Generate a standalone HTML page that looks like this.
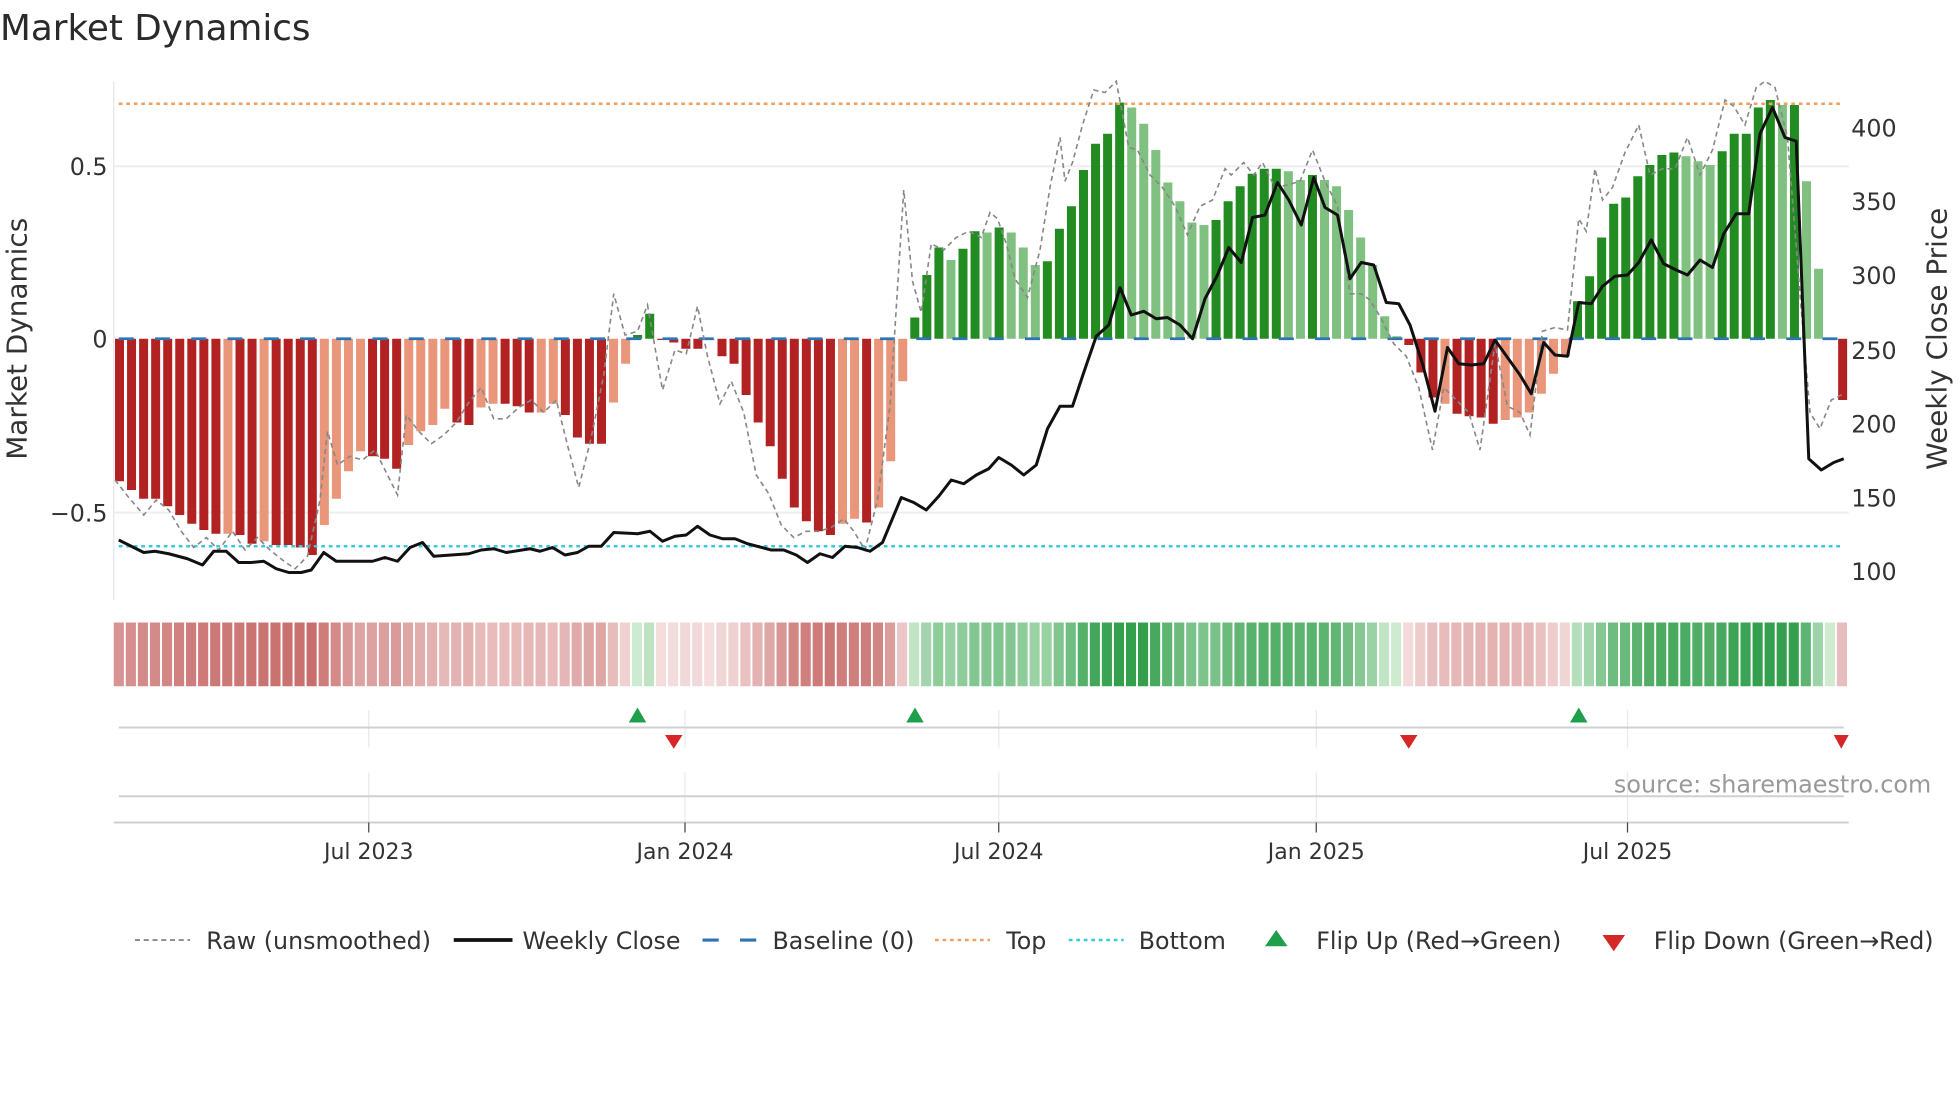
<!DOCTYPE html>
<html><head><meta charset="utf-8"><style>
html,body{margin:0;padding:0;background:#fff;}
svg{display:block;font-family:"DejaVu Sans","Liberation Sans",sans-serif;}
</style></head><body>
<svg id="s" width="1960" height="1102" viewBox="0 0 1568 881.6" xmlns="http://www.w3.org/2000/svg">
<rect width="1568" height="882" fill="#fff"/>
<text x="0" y="32" font-size="28.6" fill="#2a2a2a">Market Dynamics</text>
<line x1="91" y1="65" x2="91" y2="480" stroke="#e6e6e6" stroke-width="1"/>
<line x1="91" y1="133" x2="1479" y2="133" stroke="#eceef2" stroke-width="1.5"/>
<line x1="91" y1="410" x2="1479" y2="410" stroke="#eceef2" stroke-width="1.5"/>
<g id="bars"></g>
<line x1="95" y1="83" x2="1475" y2="83" stroke="#f0a060" stroke-width="2" stroke-dasharray="3,3"/>
<line x1="95" y1="437" x2="1475" y2="437" stroke="#3cc8dc" stroke-width="2" stroke-dasharray="3,3"/>
<line x1="95" y1="271" x2="1475" y2="271" stroke="#2e74b5" stroke-width="2.2" stroke-dasharray="12,17"/>
<polyline id="raw" fill="none" stroke="#888" stroke-width="1.3" stroke-dasharray="4,3"/>
<polyline id="close" fill="none" stroke="#111" stroke-width="2.4" stroke-linejoin="round"/>
<g font-size="19" fill="#333" text-anchor="end">
<text x="86" y="140">0.5</text><text x="86" y="278">0</text><text x="86" y="417">−0.5</text>
</g>
<g font-size="19" fill="#333">
<text x="1481" y="109">400</text><text x="1481" y="168">350</text><text x="1481" y="227">300</text><text x="1481" y="287">250</text><text x="1481" y="346">200</text><text x="1481" y="405">150</text><text x="1481" y="464">100</text>
</g>
<text transform="translate(21,271) rotate(-90)" text-anchor="middle" font-size="22.3" fill="#333">Market Dynamics</text>
<text transform="translate(1557,271) rotate(-90)" text-anchor="middle" font-size="22.3" fill="#333">Weekly Close Price</text>
<g id="heat"></g>
<g stroke="#e8eaee" stroke-width="1">
<line x1="295" y1="568" x2="295" y2="598"/><line x1="548" y1="568" x2="548" y2="598"/><line x1="799" y1="568" x2="799" y2="598"/><line x1="1053" y1="568" x2="1053" y2="598"/><line x1="1302" y1="568" x2="1302" y2="598"/>
<line x1="295" y1="618" x2="295" y2="658"/><line x1="548" y1="618" x2="548" y2="658"/><line x1="799" y1="618" x2="799" y2="658"/><line x1="1053" y1="618" x2="1053" y2="658"/><line x1="1302" y1="618" x2="1302" y2="658"/>
</g>
<line x1="95" y1="582" x2="1475" y2="582" stroke="#d0d0d0" stroke-width="1.6"/>
<line x1="95" y1="637" x2="1475" y2="637" stroke="#d0d0d0" stroke-width="1.6"/>
<line x1="91" y1="658" x2="1479" y2="658" stroke="#cfcfcf" stroke-width="1.6"/>
<g fill="#1f9e4c">
<polygon points="510,566 503,578 517,578"/><polygon points="732,566 725,578 739,578"/><polygon points="1263,566 1256,578 1270,578"/>
</g>
<g fill="#d62728">
<polygon points="539,599 532,588 546,588"/><polygon points="1127,599 1120,588 1134,588"/><polygon points="1473,599 1467,588 1479,588"/>
</g>
<text x="1545" y="634" text-anchor="end" font-size="19.1" fill="#999">source: sharemaestro.com</text>
<g stroke="#444" stroke-width="1">
<line x1="295" y1="658" x2="295" y2="666"/><line x1="548" y1="658" x2="548" y2="666"/><line x1="799" y1="658" x2="799" y2="666"/><line x1="1053" y1="658" x2="1053" y2="666"/><line x1="1302" y1="658" x2="1302" y2="666"/>
</g>
<g font-size="17.6" fill="#333" text-anchor="middle">
<text x="295" y="687">Jul 2023</text><text x="548" y="687">Jan 2024</text><text x="799" y="687">Jul 2024</text><text x="1053" y="687">Jan 2025</text><text x="1302" y="687">Jul 2025</text>
</g>
<g font-size="19" fill="#333">
<line x1="108" y1="752" x2="152" y2="752" stroke="#888" stroke-width="1.5" stroke-dasharray="4,3"/>
<text x="165" y="759">Raw (unsmoothed)</text>
<line x1="363" y1="752" x2="410" y2="752" stroke="#111" stroke-width="3"/>
<text x="418" y="759">Weekly Close</text>
<line x1="562" y1="752" x2="606" y2="752" stroke="#2e74b5" stroke-width="2.5" stroke-dasharray="13,17"/>
<text x="618" y="759">Baseline (0)</text>
<line x1="748" y1="752" x2="792" y2="752" stroke="#f0a060" stroke-width="2" stroke-dasharray="3,3"/>
<text x="805" y="759">Top</text>
<line x1="855" y1="752" x2="899" y2="752" stroke="#3cc8dc" stroke-width="2" stroke-dasharray="3,3"/>
<text x="911" y="759">Bottom</text>
<polygon points="1021,744 1012,757 1030,757" fill="#1f9e4c"/>
<text x="1053" y="759">Flip Up (Red→Green)</text>
<polygon points="1291,761 1282,748 1300,748" fill="#d62728"/>
<text x="1323" y="759">Flip Down (Green→Red)</text>
</g>
</svg>
<script>
var NS="http://www.w3.org/2000/svg";
var b=[[385,'D'],[392,'D'],[399,'D'],[399,'D'],[405,'D'],[412,'D'],[419,'D'],[424,'D'],[427,'D'],[427,'L'],[428,'D'],[435,'D'],[433,'L'],[436,'D'],[436,'D'],[438,'D'],[444,'D'],[420,'L'],[399,'L'],[377,'L'],[361,'L'],[365,'D'],[367,'D'],[375,'D'],[356,'L'],[345,'L'],[340,'L'],[327,'L'],[338,'D'],[340,'D'],[326,'L'],[323,'L'],[323,'D'],[325,'D'],[330,'D'],[330,'L'],[323,'L'],[332,'D'],[350,'D'],[355,'D'],[355,'D'],[322,'L'],[291,'L'],[268,'G'],[251,'G'],[272,'D'],[274,'D'],[279,'D'],[279,'D'],[272,'L'],[285,'D'],[291,'D'],[316,'D'],[338,'D'],[357,'D'],[383,'D'],[406,'D'],[417,'D'],[425,'D'],[428,'D'],[419,'L'],[415,'L'],[418,'D'],[406,'L'],[369,'L'],[305,'L'],[254,'G'],[220,'G'],[198,'G'],[208,'g'],[199,'G'],[185,'G'],
[186,'g'],[182,'G'],[186,'g'],[198,'g'],[212,'g'],[209,'G'],[183,'G'],[165,'G'],[136,'G'],[115,'G'],[107,'G'],[82,'G'],[86,'g'],[99,'g'],[120,'g'],[146,'g'],[161,'g'],[178,'g'],[180,'g'],[176,'G'],[161,'G'],[149,'G'],[139,'G'],[135,'G'],[135,'G'],[137,'g'],[144,'g'],[140,'G'],[144,'g'],[149,'g'],[168,'g'],[190,'g'],[212,'g'],[253,'g'],[269,'g'],[276,'D'],[298,'D'],[318,'D'],[323,'L'],[331,'D'],[333,'D'],[334,'D'],[339,'D'],[336,'L'],[334,'L'],[330,'L'],[315,'L'],[299,'L'],[285,'L'],[241,'G'],[221,'G'],[190,'G'],[163,'G'],[158,'G'],[141,'G'],[132,'G'],[124,'G'],[122,'G'],[125,'g'],[129,'g'],[132,'g'],[121,'G'],[107,'G'],[107,'G'],[86,'G'],[80,'G'],[84,'g'],[84,'G'],[145,'g'],[215,'g'],[270,'g'],[320,'D']];
var col={D:'#b22222',L:'#e9967a',G:'#228b22',g:'#80c080'};
var gb=document.getElementById('bars'),gh=document.getElementById('heat');
function lerp(a,c,t){var r=[];for(var i=0;i<3;i++)r.push(Math.round(a[i]+(c[i]-a[i])*t));return 'rgb('+r.join(',')+')';}
for(var i=0;i<b.length;i++){
 var y=b[i][0],t=b[i][1],x=92+i*9.64;
 var r=document.createElementNS(NS,'rect');
 r.setAttribute('x',x.toFixed(2));r.setAttribute('width','7.2');
 r.setAttribute('y',Math.min(y,271));r.setAttribute('height',Math.max(0.8,Math.abs(y-271)));
 r.setAttribute('fill',col[t]);gb.appendChild(r);
 var v=(271-y)/277,m=Math.min(1,Math.abs(v)/0.62);
 var c=(t=='G'||t=='g')?lerp([208,236,210],[52,160,78],m):lerp([244,222,222],[200,110,108],m);
 var h=document.createElementNS(NS,'rect');
 h.setAttribute('x',(91+i*9.64).toFixed(2));h.setAttribute('width','8.1');
 h.setAttribute('y','498');h.setAttribute('height','51');h.setAttribute('fill',c);gh.appendChild(h);
}
var cl="95,432 103,436 115,442 124,441 135,443 150,447 162,452 171,441 181,441 191,450 201,450 211,449 221,455 231,458 241,458 249,456 259,442 269,449 298,449 308,446 318,449 328,438 338,434 347,445 375,443 385,440 395,439 405,442 424,439 432,441 442,438 452,444 462,442 471,437 481,437 491,426 510,427 520,425 530,433 540,429 549,428 558,421 568,428 578,431 588,431 598,435 617,440 627,440 637,444 646,450 656,443 666,446 676,437 686,438 696,441 706,434 721,398 731,402 741,408 751,397 761,384 771,387 781,380 791,375 799,366 809,372 819,380 829,372 838,343 848,325 858,325 867,298 877,269 887,260 896,230 905,252 915,249 925,255 934,254 944,260 954,271 964,239 974,220 983,198 993,210 1002,174 1012,172 1022,146 1031,160 1041,180 1051,142 1060,166 1070,172 1080,223 1089,210 1099,212 1109,242 1119,243 1128,260 1138,291 1148,329 1158,278 1167,291 1177,292 1187,291 1196,272 1206,286 1216,300 1225,315 1235,274 1244,284 1254,285 1263,242 1273,243 1282,229 1292,221 1302,220 1311,210 1321,192 1331,211 1341,216 1350,220 1360,208 1370,214 1379,187 1389,171 1399,171 1408,107 1418,86 1428,110 1437,113 1447,367 1457,376 1467,370 1475,367";
document.getElementById('close').setAttribute('points',cl);
var rw="92,384 103,398 115,412 125,400 135,408 145,425 155,438 165,430 175,440 186,425 196,440 206,430 216,440 226,448 236,455 246,445 256,400 262,345 270,372 280,365 290,368 300,360 310,380 318,396 325,332 335,345 345,355 355,348 365,338 375,322 385,310 395,335 405,335 415,326 425,320 435,330 445,320 455,360 463,390 473,350 483,300 491,235 500,268 510,265 518,244 530,312 540,280 549,283 558,245 566,285 576,323 585,305 595,330 605,380 615,395 625,420 635,430 645,425 655,425 665,422 675,415 683,425 692,440 702,400 712,325 723,152 730,225 737,250 745,195 755,200 765,190 775,185 785,190 792,170 798,175 805,195 812,223 822,238 832,200 840,150 848,110 852,145 858,130 866,100 875,72 884,74 893,65 903,118 910,120 920,140 930,150 940,165 950,188 960,165 970,160 980,135 985,140 995,130 1003,140 1010,130 1020,150 1030,148 1040,145 1050,120 1060,145 1070,165 1080,235 1089,235 1096,240 1105,255 1115,275 1125,285 1135,310 1146,360 1155,310 1165,320 1175,330 1184,360 1196,275 1206,325 1216,330 1224,348 1234,265 1244,262 1254,264 1263,175 1269,185 1276,135 1282,160 1290,150 1300,122 1311,100 1320,140 1330,135 1340,135 1350,110 1360,140 1370,120 1380,80 1387,85 1396,100 1405,70 1412,65 1420,70 1430,110 1440,235 1448,330 1456,343 1465,320 1475,315";
document.getElementById('raw').setAttribute('points',rw);
</script>
</body></html>
